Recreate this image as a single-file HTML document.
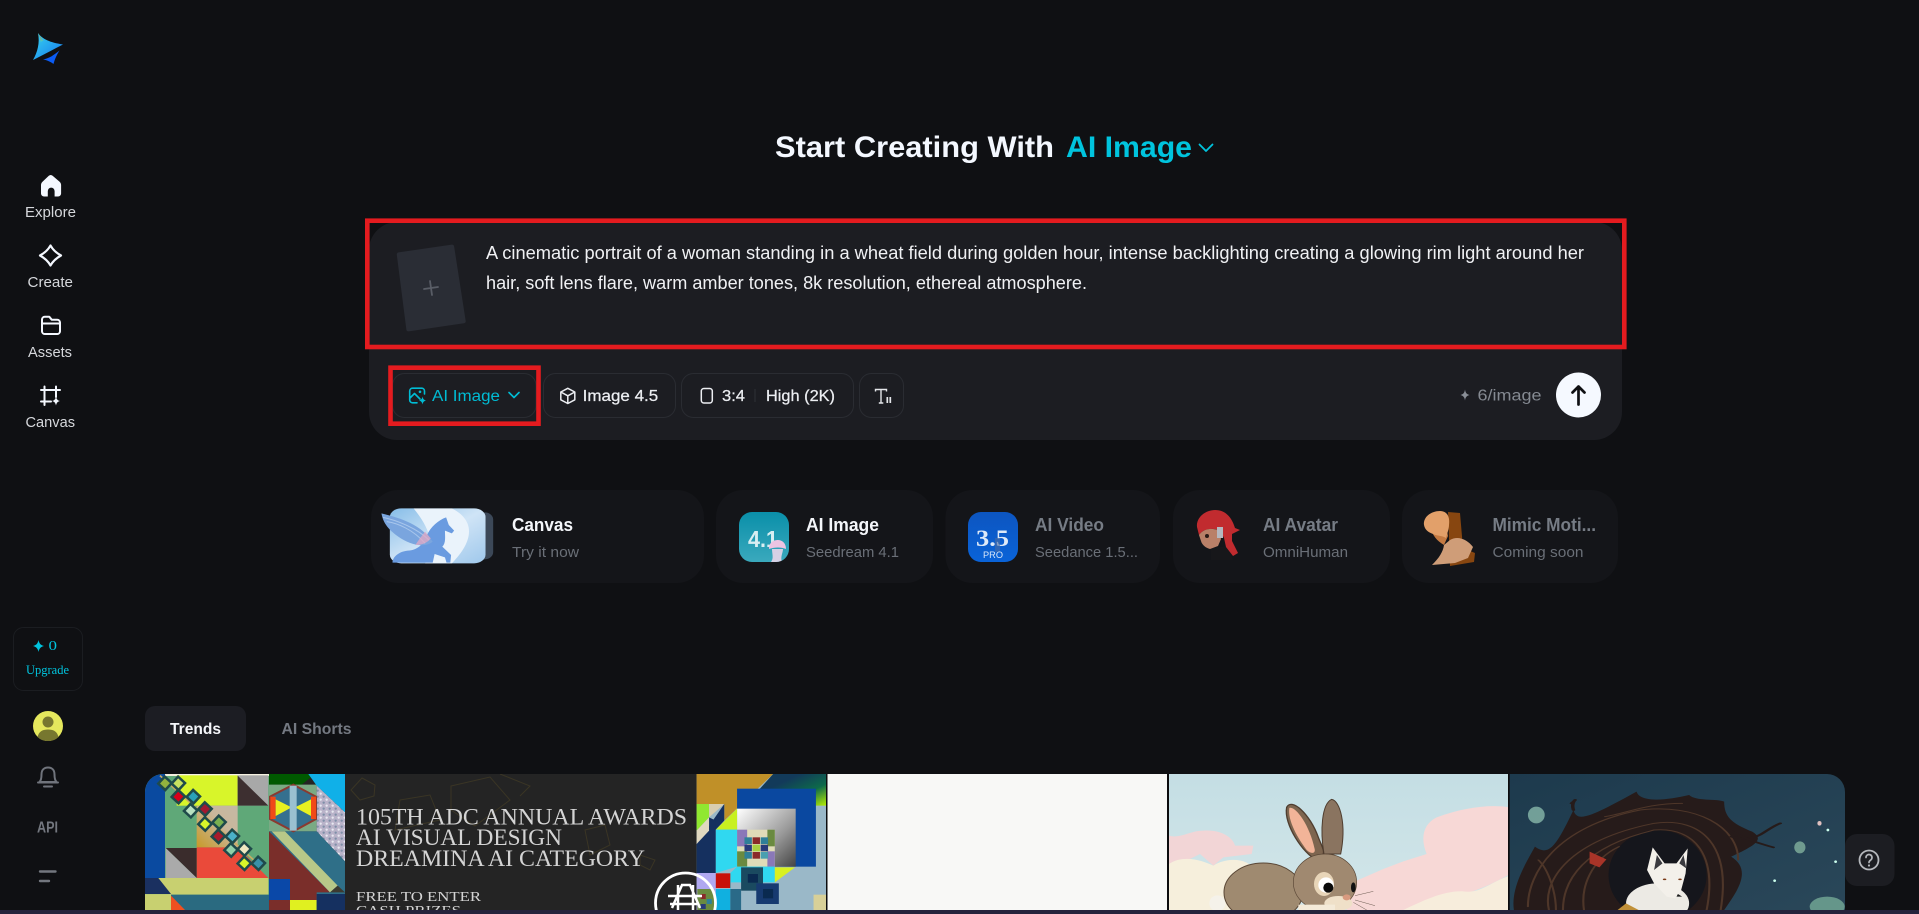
<!DOCTYPE html>
<html lang="en">
<head>
<meta charset="utf-8">
<title>Start Creating With AI Image</title>
<style>
html,body{margin:0;padding:0;width:1919px;height:914px;overflow:hidden;background:#0f1013}
svg{display:block}
text{font-family:"Liberation Sans",sans-serif}
.s{font-family:"Liberation Serif",serif}
</style>
</head>
<body>
<svg width="1919" height="914" viewBox="0 0 1919 914" xmlns="http://www.w3.org/2000/svg">
<defs>
<linearGradient id="lg" x1="0" y1="0" x2="1" y2="1"><stop offset="0" stop-color="#38d5ee"/><stop offset="1" stop-color="#1477f0"/></linearGradient>
<linearGradient id="lo" x1="0" y1="0" x2="0" y2="1"><stop offset="0" stop-color="#e8780f"/><stop offset="1" stop-color="#3cd0d8"/></linearGradient>
<linearGradient id="peg" x1="0" y1="0" x2="1" y2="1"><stop offset="0" stop-color="#86bde8"/><stop offset=".5" stop-color="#cfe4f6"/><stop offset="1" stop-color="#9fc8ec"/></linearGradient>
<linearGradient id="t41" x1="0" y1="0" x2="0" y2="1"><stop offset="0" stop-color="#0a8fa9"/><stop offset="1" stop-color="#3aa9bd"/></linearGradient>
<linearGradient id="t35" x1="0" y1="0" x2="0" y2="1"><stop offset="0" stop-color="#0c55c0"/><stop offset="1" stop-color="#0a63d8"/></linearGradient>
<linearGradient id="gold" x1="0" y1="1" x2="1" y2="0"><stop offset="0" stop-color="#c89a28"/><stop offset=".6" stop-color="#c9b79c"/><stop offset="1" stop-color="#c4b8a4"/></linearGradient>
<linearGradient id="lime" x1="0" y1="0" x2="1" y2="1"><stop offset=".3" stop-color="#123a5a"/><stop offset=".65" stop-color="#0d6a4a"/><stop offset="1" stop-color="#b8f000"/></linearGradient>
<linearGradient id="grayg" x1="0" y1="0" x2="1" y2="1"><stop offset="0" stop-color="#fff"/><stop offset=".6" stop-color="#999"/><stop offset="1" stop-color="#444"/></linearGradient>
<linearGradient id="fx" x1="0" y1="0" x2="1" y2="1"><stop offset="0" stop-color="#1d3a4d"/><stop offset="1" stop-color="#2a4759"/></linearGradient>
<linearGradient id="sky" x1="0" y1="0" x2="0" y2="1"><stop offset="0" stop-color="#c4dee4"/><stop offset="1" stop-color="#d3e6e9"/></linearGradient>
<clipPath id="gal"><path d="M145 930V792a18 18 0 0 1 18-18H1827a18 18 0 0 1 18 18V930Z"/></clipPath>
<clipPath id="a1"><rect x="145" y="774" width="681" height="136"/></clipPath>
<clipPath id="pegc"><rect x="78" y="85" width="250" height="165" rx="30" ry="26"/></clipPath>
<clipPath id="c41"><rect x="739" y="512" width="50" height="50" rx="13"/></clipPath>
<clipPath id="c35"><rect x="968" y="512" width="50" height="50" rx="13"/></clipPath>
<pattern id="dots" width="18" height="18" patternUnits="userSpaceOnUse"><rect width="18" height="18" fill="#b9b3c9"/><circle cx="5" cy="5" r="3.500" fill="#e8e8f0"/><circle cx="14" cy="14" r="3.500" fill="#7f8fa8"/></pattern>
<g id="dm"><rect x="-18" y="-18" width="36" height="36" fill="#1f4a4a"/><rect x="-10.500" y="-10.500" width="21" height="21"/></g>
</defs>

<rect width="1919" height="914" fill="#0f1013"/>

<!-- logo -->
<path d="M38 33C42 39 50 42.500 63 44.500C54 49 43 55 33 60C37.500 52 40 43 38 33Z" fill="url(#lg)"/>
<path d="M38 33C39.500 36 40.500 38 40.500 42L43.500 40.500C41 38 39 35 38 33Z" fill="url(#lo)"/>
<path d="M43 59.500C49 58.500 54 55 59.500 50.500C56.500 55 54.500 60 53.500 64C51 62 47 60 43 59.500Z" fill="#0b5cf5"/>

<!-- sidebar icons -->
<path d="M48.800 175.800a3 3 0 0 1 3.800 0l7 6a4 4 0 0 1 1.500 3v8.700a3 3 0 0 1-3 3h-3.500v-5.500a3.400 3.400 0 0 0-6.800 0v5.500h-3.800a3 3 0 0 1-3-3v-8.700a4 4 0 0 1 1.500-3z" fill="#f4f8ff"/>
<path d="M50.500 245.500C53 250 56.500 253 61 255.500C56.500 258 53 261 50.500 265.500C48 261 44.500 258 40 255.500C44.500 253 48 250 50.500 245.500Z" fill="none" stroke="#f4f8ff" stroke-width="2.200" stroke-linejoin="round"/>
<path d="M42 319.500a2.800 2.800 0 0 1 2.800-2.800h4.400l2.500 3h5.500a2.800 2.800 0 0 1 2.800 2.800v8.700a2.800 2.800 0 0 1-2.800 2.800H44.800a2.800 2.800 0 0 1-2.800-2.800zM42 323.500h17.800" fill="none" stroke="#f4f8ff" stroke-width="2" stroke-linejoin="round"/>
<path d="M44.500 386.500V405M56 386.500V397M41 390H60M41 401.500H51" fill="none" stroke="#f4f8ff" stroke-width="2" stroke-linecap="round"/>
<path d="M56 396.500C56.500 399 57.500 400.500 60 401C57.500 401.500 56.500 403 56 405.500C55.500 403 54.500 401.500 52 401C54.500 400.500 55.500 399 56 396.500Z" fill="#f4f8ff"/>
<g fill="#d6d8dc" font-size="14.500">
<text x="25" y="217" textLength="51" lengthAdjust="spacingAndGlyphs">Explore</text>
<text x="27.500" y="287" textLength="45.500" lengthAdjust="spacingAndGlyphs">Create</text>
<text x="28" y="357" textLength="44" lengthAdjust="spacingAndGlyphs">Assets</text>
<text x="25.500" y="427" textLength="49.500" lengthAdjust="spacingAndGlyphs">Canvas</text>
</g>

<!-- upgrade -->
<rect x="13.500" y="627.500" width="69" height="63" rx="10" fill="#0f1013" stroke="#1b1d21"/>
<path d="M38.500 640C39.200 643.500 40.500 645 44 646C40.500 647 39.200 648.500 38.500 652C37.800 648.500 36.500 647 33 646C36.500 645 37.800 643.500 38.500 640Z" fill="#00c4de"/>
<text class="s" x="48.500" y="650" font-size="13.500" fill="#00c4de" textLength="8.500" lengthAdjust="spacingAndGlyphs">0</text>
<text class="s" x="26" y="674" font-size="13" fill="#00c4de" textLength="43" lengthAdjust="spacingAndGlyphs">Upgrade</text>
<circle cx="48" cy="726" r="15" fill="#e5e85d"/>
<circle cx="48" cy="722" r="5.500" fill="#77772f"/>
<path d="M37.500 737C39 731 43 729.500 48 729.500S57 731 58.500 737C55.500 740 52 741 48 741S40.500 740 37.500 737Z" fill="#77772f"/>
<path d="M39.500 782C41.500 780 41.500 777 41.500 774.500C41.500 770 44 767.500 48 767.500S54.500 770 54.500 774.500C54.500 777 54.500 780 56.500 782ZM38 782.500H58M44 786.500H52" fill="none" stroke="#70747c" stroke-width="2" stroke-linecap="round" stroke-linejoin="round"/>
<text x="37" y="832.500" font-size="16" font-weight="700" fill="#73777f" textLength="21" lengthAdjust="spacingAndGlyphs">API</text>
<path d="M40 871.500H55.500M40 881H49" stroke="#73777f" stroke-width="2.400" stroke-linecap="round"/>

<!-- heading -->
<text x="775" y="157" font-size="30" font-weight="700" fill="#f4f8ff" textLength="279" lengthAdjust="spacingAndGlyphs">Start Creating With</text>
<text x="1066" y="157" font-size="30" font-weight="700" fill="#00c4de" textLength="126" lengthAdjust="spacingAndGlyphs">AI Image</text>
<path d="M1199.500 144.500L1206 151L1212.500 144.500" fill="none" stroke="#00c4de" stroke-width="1.800" stroke-linecap="round" stroke-linejoin="round"/>

<!-- prompt panel -->
<rect x="369" y="222" width="1253" height="218" rx="28" fill="#1c1d22"/>
<path d="M398.500 252.400L451.800 244.600a2 2 0 0 1 2.300 1.700L465.700 321a2 2 0 0 1-1.700 2.300L408.700 331.400a2 2 0 0 1-2.300-1.700L396.800 254.700a2 2 0 0 1 1.700-2.300Z" fill="#2a2d35"/>
<path d="M424 289L438 287M430 281L432 295" stroke="#595d66" stroke-width="1.800" stroke-linecap="round"/>
<text x="486" y="259" font-size="18" fill="#f0f1f4" textLength="1098" lengthAdjust="spacingAndGlyphs">A cinematic portrait of a woman standing in a wheat field during golden hour, intense backlighting creating a glowing rim light around her</text>
<text x="486" y="289" font-size="18" fill="#f0f1f4" textLength="601" lengthAdjust="spacingAndGlyphs">hair, soft lens flare, warm amber tones, 8k resolution, ethereal atmosphere.</text>

<!-- chips -->
<g fill="none" stroke="#2a2c32">
<rect x="392.500" y="373.500" width="143.500" height="44" rx="12"/>
<rect x="543.500" y="373.500" width="132" height="44" rx="12"/>
<rect x="681.500" y="373.500" width="172" height="44" rx="12"/>
<rect x="859.500" y="373.500" width="44" height="44" rx="12"/>
</g>
<path d="M424.500 394V391a2.800 2.800 0 0 0-2.800-2.800H412.500a2.800 2.800 0 0 0-2.800 2.800V400a2.800 2.800 0 0 0 2.800 2.800H417M410 398L414.500 393.500L420 399" fill="none" stroke="#00bcd4" stroke-width="1.600" stroke-linecap="round" stroke-linejoin="round"/>
<circle cx="420" cy="391.800" r="1.300" fill="#00bcd4"/>
<path d="M422.500 396.500C423 399 424 400 426 400.500C424 401 423 402 422.500 404.500C422 402 421 401 419 400.500C421 400 422 399 422.500 396.500Z" fill="#00bcd4"/>
<text x="432" y="401" font-size="15.500" fill="#00bcd4" textLength="68" lengthAdjust="spacingAndGlyphs">AI Image</text>
<path d="M509 392.500L514 397.500L519 392.500" fill="none" stroke="#00bcd4" stroke-width="1.600" stroke-linecap="round" stroke-linejoin="round"/>
<path d="M567.800 388.300L574.800 392V399.800L567.800 403.500L560.800 399.800V392ZM560.800 392L567.800 395.800L574.800 392M567.800 395.800V403.500" fill="none" stroke="#eceef2" stroke-width="1.500" stroke-linejoin="round"/>
<text x="582.700" y="401" font-size="15.500" fill="#eceef2" stroke="#eceef2" stroke-width=".25" textLength="75.500" lengthAdjust="spacingAndGlyphs">Image 4.5</text>
<rect x="701.300" y="388.500" width="11" height="14.500" rx="2.600" fill="none" stroke="#eceef2" stroke-width="1.500"/>
<text x="722" y="401" font-size="15.500" fill="#eceef2" stroke="#eceef2" stroke-width=".25" textLength="23" lengthAdjust="spacingAndGlyphs">3:4</text>
<path d="M755 389V402" stroke="#2c2e34" stroke-width="1.200"/>
<text x="766" y="401" font-size="15.500" fill="#eceef2" stroke="#eceef2" stroke-width=".25" textLength="69" lengthAdjust="spacingAndGlyphs">High (2K)</text>
<path d="M875.500 391.500V389.500H886.500V391.500M881 389.500V403M878.800 403H883.300" fill="none" stroke="#e4e6ea" stroke-width="1.400"/>
<path d="M887.300 397V403M890.300 397V403" stroke="#e4e6ea" stroke-width="1.700"/>

<path d="M1465 389.500C1465.600 393 1466.500 394 1469.500 395C1466.500 396 1465.600 397 1465 400.500C1464.400 397 1463.500 396 1460.500 395C1463.500 394 1464.400 393 1465 389.500Z" fill="#8a8f97"/>
<text x="1477.500" y="400.500" font-size="15.500" fill="#858a92" textLength="64" lengthAdjust="spacingAndGlyphs">6/image</text>
<circle cx="1578.500" cy="395" r="22.500" fill="#f5f9ff"/>
<path d="M1578.500 404.500V386.500M1572.500 392.500L1578.500 386.500L1584.500 392.500" fill="none" stroke="#0f1013" stroke-width="2.700" stroke-linecap="round" stroke-linejoin="round"/>

<!-- annotations -->
<rect x="367.300" y="220.700" width="1257" height="126.300" fill="none" stroke="#e41b1f" stroke-width="4.600"/>
<rect x="390.500" y="367.700" width="148" height="56" fill="none" stroke="#e41b1f" stroke-width="4.600"/>

<!-- cards -->
<g fill="#141519">
<rect x="371" y="490" width="333" height="93" rx="27"/>
<rect x="716" y="490" width="217" height="93" rx="27"/>
<rect x="945.500" y="490" width="214.500" height="93" rx="27"/>
<rect x="1173" y="490" width="217" height="93" rx="27"/>
<rect x="1402" y="490" width="216" height="93" rx="27"/>
</g>

<!-- pegasus thumb -->
<g transform="translate(360 480) scale(.3827 .3333)">
<rect x="250" y="97" width="98" height="141" rx="22" fill="#3c4858"/>
<rect x="78" y="85" width="250" height="165" rx="30" ry="26" fill="url(#peg)"/>
<g clip-path="url(#pegc)">
<path d="M140 85H240C300 120 300 180 240 250H170C200 200 180 140 140 85Z" fill="#eaf3fb"/>
</g>
<path d="M225 112L232 135L246 152L240 160L222 152C222 170 225 190 215 200L238 225L236 248H226L222 232L195 222L190 248H85C85 232 100 215 125 212C150 210 165 195 175 165C185 140 205 120 225 112Z" fill="#6a9be0"/>
<path d="M56 100C110 115 160 135 190 185C170 205 130 195 100 170C70 145 60 125 56 100Z" fill="#7aa5de"/>
<path d="M70 125C100 130 140 150 170 190M60 112C95 120 150 145 180 180" stroke="#a8c6ec" stroke-width="3" fill="none"/>
<path d="M170 155C160 170 150 185 145 195C160 195 175 190 185 175Z" fill="#e4a9c4" opacity=".75"/>
</g>
<text x="512" y="531" font-size="18" font-weight="700" fill="#f4f6fa" textLength="61" lengthAdjust="spacingAndGlyphs">Canvas</text>
<text x="512" y="557" font-size="15" fill="#6a6f77" textLength="67" lengthAdjust="spacingAndGlyphs">Try it now</text>

<!-- 4.1 -->
<rect x="739" y="512" width="50" height="50" rx="13" fill="url(#t41)"/>
<g clip-path="url(#c41)">
<text x="748" y="547" font-size="23" font-weight="700" fill="#d8eef2" textLength="30" lengthAdjust="spacingAndGlyphs">4.1</text>
<path d="M769 549C769 542 774 540 778 540S786 543 786 549C781 547 775 547 769 549Z" fill="#ecc4e2"/>
<path d="M772 549C772 554 774 558 771 562H782C780 557 783 553 783 549Z" fill="#f2d8ec" opacity=".85"/>
</g>
<text x="806" y="531" font-size="18" font-weight="700" fill="#f4f6fa" textLength="73" lengthAdjust="spacingAndGlyphs">AI Image</text>
<text x="806" y="557" font-size="15" fill="#6a6f77" textLength="93" lengthAdjust="spacingAndGlyphs">Seedream 4.1</text>

<!-- 3.5 -->
<rect x="968" y="512" width="50" height="50" rx="13" fill="url(#t35)"/>
<g clip-path="url(#c35)">
<text x="976" y="546" class="s" font-size="23" font-weight="700" fill="#dde9f8" textLength="33" lengthAdjust="spacingAndGlyphs">3.5</text>
<path d="M995 538h5v14h-5z" fill="#4a6aa0" opacity=".6"/>
<text x="983" y="558" font-size="9" fill="#d8e6f8" textLength="20" lengthAdjust="spacingAndGlyphs">PRO</text>
</g>
<text x="1035" y="531" font-size="18" font-weight="700" fill="#767c85" textLength="69" lengthAdjust="spacingAndGlyphs">AI Video</text>
<text x="1035" y="557" font-size="15" fill="#6a6f77" textLength="103" lengthAdjust="spacingAndGlyphs">Seedance 1.5...</text>

<!-- avatar -->
<path d="M1211 548L1228 546L1233 560H1211Z" fill="#17171a"/>
<path d="M1197 527C1196 517 1206 510 1215 510C1226 510 1232 518 1235 528L1240 530L1232 534L1232 541L1238 553L1233 556L1226 547L1224 538L1220 530C1212 528 1204 528 1199 535Z" fill="#c12b2f"/>
<path d="M1199 535C1204 528 1212 528 1218 530L1221 539L1218 546L1210 549C1206 548 1202 545 1201 541Z" fill="#b98068"/>
<circle cx="1207" cy="536" r="2" fill="#2a1a16"/>
<rect x="1217" y="527" width="6" height="11" fill="#b5b8c0"/>
<text x="1263" y="531" font-size="18" font-weight="700" fill="#767c85" textLength="75" lengthAdjust="spacingAndGlyphs">AI Avatar</text>
<text x="1263" y="557" font-size="15" fill="#6a6f77" textLength="85" lengthAdjust="spacingAndGlyphs">OmniHuman</text>

<!-- mimic -->
<path d="M1448 512L1460 513L1463 548L1475 553L1474 562L1450 566Z" fill="#a4530e" opacity=".8"/>
<path d="M1444 545L1450 540C1458 535 1468 540 1473 547L1468 558L1455 563L1432 565C1439 558 1443 552 1444 545Z" fill="#cf9d78"/>
<path d="M1431 528C1432 535 1437 541 1444 545L1448 536L1446 525Z" fill="#c47a42"/>
<path d="M1424 525C1423 517 1431 511 1440 511C1448 511 1450 518 1449 525C1449 529 1447 534 1446 538C1441 535 1436 536 1433 534C1428 532 1425 530 1424 525Z" fill="#e2a06a"/>
<text x="1492.500" y="531" font-size="18" font-weight="700" fill="#767c85" textLength="103.500" lengthAdjust="spacingAndGlyphs">Mimic Moti...</text>
<text x="1492.500" y="557" font-size="15" fill="#6a6f77" textLength="91" lengthAdjust="spacingAndGlyphs">Coming soon</text>

<!-- tabs -->
<rect x="145" y="706" width="101" height="45" rx="10" fill="#1c1d23"/>
<text x="170" y="734" font-size="16" font-weight="700" fill="#f4f6fa" textLength="51" lengthAdjust="spacingAndGlyphs">Trends</text>
<text x="281.500" y="734" font-size="16" font-weight="700" fill="#747982" textLength="70" lengthAdjust="spacingAndGlyphs">AI Shorts</text>

<!-- gallery -->
<g clip-path="url(#gal)">
<g clip-path="url(#a1)">
<rect x="145" y="774" width="681" height="140" fill="#242424"/>
<g fill="none" stroke="#3a3524" stroke-width="1">
<path d="M362 778L375 785L374 796L360 800L351 790ZM451 786L490 777L510 800L475 826L451 810ZM500 774L530 786L520 796M400 800L430 795L440 820L395 830ZM585 830L605 825L610 845L590 855ZM640 855L655 860L650 870L640 865Z"/>
</g>
<g transform="translate(145 774) scale(.33333)">
<rect width="372" height="408" fill="#5fa878"/>
<rect x="60" y="0" width="312" height="6" fill="#f4f0e0"/>
<rect width="60" height="312" fill="#0a4aa0"/>
<rect x="95" y="4" width="183" height="91" fill="#d8f52a"/>
<rect x="278" y="4" width="92" height="91" fill="#a8a8a8"/>
<path d="M278 5L278 95L370 95Z" fill="#3d2f30"/>
<rect x="155" y="95" width="123" height="125" fill="url(#gold)"/>
<path d="M155 220H278L370 312H155Z" fill="#ea4a3a"/>
<path d="M62 222H155V312Z" fill="#3a2c2c"/>
<path d="M62 222L155 312H62Z" fill="#aaaaaa"/>
<path d="M45 5L345 275" stroke="#c9ab62" stroke-width="5"/>
<use href="#dm" transform="translate(60 28) rotate(43)" fill="#93b23e"/>
<use href="#dm" transform="translate(100 68) rotate(43)" fill="#d8001a"/>
<use href="#dm" transform="translate(100 28) rotate(43)" fill="#c8e060"/>
<use href="#dm" transform="translate(145 68) rotate(43)" fill="#2aa0b8"/>
<use href="#dm" transform="translate(137 110) rotate(43)" fill="#b8e0c0"/>
<use href="#dm" transform="translate(180 105) rotate(43)" fill="#a01830"/>
<use href="#dm" transform="translate(180 150) rotate(43)" fill="#d8f52a"/>
<use href="#dm" transform="translate(222 145) rotate(43)" fill="#7ab050"/>
<use href="#dm" transform="translate(220 187) rotate(43)" fill="#a81c2c"/>
<use href="#dm" transform="translate(262 187) rotate(43)" fill="#4ab0c8"/>
<use href="#dm" transform="translate(258 228) rotate(43)" fill="#90d0a8"/>
<use href="#dm" transform="translate(298 225) rotate(43)" fill="#f0e8c0"/>
<use href="#dm" transform="translate(298 268) rotate(43)" fill="#d8f52a"/>
<use href="#dm" transform="translate(340 268) rotate(43)" fill="#3a90a8"/>
<path d="M0 312H370V362H0Z" fill="#c8d070"/>
<path d="M0 312H40L78 360H0Z" fill="#1a3060"/>
<rect y="362" width="78" height="46" fill="#c8d070"/>
<rect x="78" y="362" width="294" height="46" fill="#2a6a80"/>
<path d="M78 365L120 408H78Z" fill="#f05020"/>
<path d="M372 0H510L470 32H372Z" fill="#005a00"/>
<path d="M372 32H515V172H372Z" fill="#7aaa84"/>
<path d="M490 0H600V115L515 35Z" fill="#10b0e8"/>
<path d="M515 35L600 115V262L515 172Z" fill="url(#dots)"/>
<path d="M372 172H515L600 262V408H372Z" fill="#2f6f88"/>
<path d="M372 172V355H555Z" fill="#7a2e2a"/>
<path d="M380 172H420L578 335L555 355Z" fill="#b8c888"/>
<path d="M375 68L445 32L513 68V135L445 172L375 135Z" fill="#35708f" stroke="#8a3a30" stroke-width="6"/>
<rect x="376" y="68" width="16" height="67" fill="#f04a18"/>
<rect x="498" y="68" width="15" height="67" fill="#f04a18"/>
<path d="M392 76L440 100L392 126ZM498 76L450 100L498 126Z" fill="#e8f020"/>
<rect x="434" y="35" width="21" height="135" fill="#9ac0d0"/>
<rect x="372" y="315" width="63" height="63" fill="#0a48a8"/>
<rect x="435" y="315" width="80" height="63" fill="#7a2e2a"/>
<rect x="372" y="378" width="63" height="30" fill="#7a2e2a"/>
<rect x="435" y="378" width="80" height="30" fill="#e0f020"/>
<path d="M555 355L578 335L600 355Z" fill="#3d3a30"/>
<rect x="515" y="360" width="85" height="48" fill="#153060"/>
</g>
<g fill="#d4d4d4">
<text class="s" x="356" y="824.500" font-size="23" textLength="331" lengthAdjust="spacingAndGlyphs">105TH ADC ANNUAL AWARDS</text>
<text class="s" x="356" y="845" font-size="23" textLength="206" lengthAdjust="spacingAndGlyphs">AI VISUAL DESIGN</text>
<text class="s" x="356" y="866" font-size="23" textLength="289" lengthAdjust="spacingAndGlyphs">DREAMINA AI CATEGORY</text>
<text class="s" x="356" y="901" font-size="14" textLength="125" lengthAdjust="spacingAndGlyphs">FREE TO ENTER</text>
<text class="s" x="356" y="915" font-size="14" textLength="105" lengthAdjust="spacingAndGlyphs">CASH PRIZES</text>
</g>
<g transform="translate(640 774) scale(.337 .33333)">
<rect x="168" width="400" height="408" fill="#9ab8c8"/>
<path d="M168 0H395L250 140V90H168Z" fill="#c09028"/>
<path d="M395 0H555V95H400L355 45Z" fill="url(#lime)"/>
<path d="M168 210L250 90V140L225 167V297H168Z" fill="#15305f"/>
<path d="M168 90H205V130L168 170Z" fill="#90e830"/>
<path d="M205 90H250L205 130Z" fill="#d8cdb0"/>
<path d="M168 170L205 130V170L168 210Z" fill="#e0d8c0"/>
<path d="M205 170L205 130L225 140L225 167Z" fill="#15305f"/>
<rect x="288" y="44" width="234" height="234" fill="#0a48a0"/>
<rect x="288" y="104" width="174" height="174" fill="url(#grayg)"/>
<rect x="288" y="167" width="112" height="111" fill="#e0dcb8"/>
<rect x="288" y="167" width="30" height="50" fill="#8a78b8"/>
<rect x="378" y="167" width="22" height="50" fill="#6a8a40"/>
<rect x="288" y="232" width="30" height="46" fill="#6a8a40"/>
<rect x="378" y="232" width="22" height="46" fill="#8a78b8"/>
<rect x="310" y="190" width="22" height="20" fill="#2f7f98"/>
<rect x="334" y="190" width="22" height="20" fill="#8a2a2a"/>
<rect x="358" y="190" width="22" height="20" fill="#2f7f98"/>
<rect x="310" y="212" width="22" height="20" fill="#283a7a"/>
<rect x="334" y="212" width="22" height="20" fill="#a8d040"/>
<rect x="358" y="212" width="22" height="20" fill="#283a7a"/>
<rect x="310" y="234" width="22" height="20" fill="#2f7f98"/>
<rect x="334" y="234" width="22" height="20" fill="#8a2a2a"/>
<rect x="358" y="234" width="22" height="20" fill="#4a9fb0"/>
<path d="M225 167L288 104V167Z" fill="#c8f020"/>
<path d="M225 167H288V278L225 297Z" fill="#30d8f0"/>
<path d="M288 278H400V325H270V345H268L268 297Z" fill="#30d8f0"/>
<path d="M400 280H460L400 325Z" fill="#d8f020"/>
<rect x="168" y="297" width="57" height="111" fill="#b0a8f0"/>
<rect x="225" y="298" width="43" height="44" fill="#c81008"/>
<rect x="225" y="345" width="43" height="63" fill="#10b0e0"/>
<rect x="268" y="345" width="32" height="63" fill="#2a6a88"/>
<rect x="300" y="280" width="65" height="70" fill="#1a4a60"/>
<rect x="345" y="328" width="67" height="62" fill="#173a70"/>
<rect x="320" y="300" width="30" height="26" fill="#0a2a50"/>
<rect x="365" y="345" width="30" height="28" fill="#0a2a50"/>
<rect x="170" y="345" width="50" height="63" fill="#6a8a40"/>
<rect x="180" y="360" width="15" height="15" fill="#8a2a2a"/><rect x="198" y="375" width="15" height="15" fill="#2f7f98"/><rect x="180" y="390" width="15" height="15" fill="#283a7a"/>
<rect x="515" y="362" width="45" height="46" fill="#d8d098"/>
</g>
<circle cx="685.500" cy="903" r="30" fill="none" stroke="#fff" stroke-width="2.800"/>
<path d="M672 908L682 885H690L700 908M668 896H702M670 904H697M678 885V912M693 885V912" fill="none" stroke="#fff" stroke-width="2.500"/>
</g>

<rect x="826" y="774" width="2" height="140" fill="#0c0c0e"/>
<rect x="827.500" y="774" width="339.500" height="140" fill="#f8f8f6"/>
<rect x="1167" y="774" width="2" height="140" fill="#0c0c0e"/>

<!-- rabbit -->
<g transform="translate(1170 774) scale(.33333)">
<rect x="-3" width="1024" height="408" fill="url(#sky)"/>
<path d="M-3 185C30 195 60 170 100 170C150 165 190 190 195 215L250 215L245 240L160 250L130 275L90 240L30 270H-3Z" fill="#f2d5d6"/>
<path d="M-3 270C40 240 100 260 130 275C170 250 230 250 260 290L300 408H-3Z" fill="#f6efdc"/>
<path d="M1020 100C960 90 880 100 800 130C760 150 750 190 770 240L700 262L640 285L560 320L530 408H700C800 380 900 370 1020 300Z" fill="#f7d8d6"/>
<path d="M700 408C760 380 820 350 880 352C930 360 960 325 1020 305V408Z" fill="#f7eddc"/>
<circle cx="142" cy="388" r="24" fill="#f5f2ea"/>
<ellipse cx="280" cy="355" rx="118" ry="88" fill="#9f8a70" stroke="#5a4736" stroke-width="3"/>
<path d="M350 100C365 70 420 120 445 190C458 225 475 240 440 258C400 240 340 150 350 100Z" fill="#7d654f" stroke="#4f3d2f" stroke-width="4"/>
<path d="M358 102C375 95 418 150 434 225C437 238 425 242 410 228C385 195 352 140 358 102Z" fill="#f2b498"/>
<path d="M485 76C510 80 530 150 512 240H462C450 170 455 90 485 76Z" fill="#8a7460" stroke="#4f3d2f" stroke-width="3"/>
<ellipse cx="465" cy="325" rx="95" ry="85" fill="#a08970" stroke="#5a4736" stroke-width="2"/>
<ellipse cx="505" cy="388" rx="42" ry="22" fill="#efe0c8"/>
<rect x="385" y="392" width="110" height="16" fill="#f4ead8"/>
<ellipse cx="462" cy="330" rx="30" ry="36" fill="#e8d5b8"/>
<circle cx="468" cy="333" r="23" fill="#fff"/>
<circle cx="475" cy="341" r="15" fill="#0a0a0a"/>
<ellipse cx="550" cy="340" rx="7" ry="15" fill="#111"/>
<ellipse cx="530" cy="370" rx="12" ry="9" fill="#d89a7f"/>
<path d="M555 365L610 352M555 378L615 395M550 385L590 408" stroke="#6a5a50" stroke-width="1.500" fill="none"/>
</g>
<rect x="1508" y="774" width="2" height="140" fill="#0c0c0e"/>

<!-- fox -->
<g transform="translate(820 760) scale(.7009 .33333)">
<rect x="984" y="42" width="480" height="410" fill="url(#fx)"/>
<path d="M990 450C985 380 1010 300 1020 260C1040 290 1050 260 1075 150C1080 190 1100 170 1165 95C1170 130 1210 120 1240 105C1250 125 1280 115 1290 125C1290 170 1300 190 1330 215C1350 240 1330 260 1300 290C1330 330 1310 390 1290 450Z" fill="#261b1a"/>
<ellipse cx="1195" cy="345" rx="70" ry="135" fill="#15161c"/>
<g fill="none" stroke="#4e3629" stroke-width="3" stroke-linecap="round">
<path d="M1040 450C1030 360 1070 240 1190 190C1260 170 1300 260 1285 450"/>
<path d="M1060 450C1060 360 1090 260 1190 210C1250 200 1280 290 1265 450"/>
<path d="M1010 440C1010 340 1050 200 1170 150C1250 130 1310 200 1310 300"/>
<path d="M1090 450C1085 380 1100 300 1140 260M1025 300C1040 330 1050 400 1050 450M1120 170C1150 160 1180 130 1230 130"/>
</g>
<g fill="none" stroke="#261b1a" stroke-linecap="round">
<path d="M1300 230C1340 250 1345 210 1370 190" stroke-width="5"/>
<path d="M1290 200C1320 240 1340 250 1360 262" stroke-width="5"/>
<path d="M1075 150C1070 120 1085 110 1072 130" stroke-width="5"/>
</g>
<ellipse cx="1195" cy="430" rx="45" ry="60" fill="#eceae4"/>
<path d="M1188 262L1205 310H1222L1238 265L1235 340L1228 395L1220 415L1208 410L1190 370L1180 330Z" fill="#f3f0ea"/>
<path d="M1194 285L1202 310L1190 330ZM1232 285L1226 310L1236 325Z" fill="#3a3a3f"/>
<circle cx="1205" cy="358" r="2.500" fill="#7a3a18"/><circle cx="1227" cy="358" r="2.500" fill="#7a3a18"/>
<path d="M1224 402L1230 410L1222 410Z" fill="#1a1a1a"/>
<path d="M1098 275L1122 298L1112 322L1098 310Z" fill="#a83428"/>
<path d="M1138 450L1150 430L1168 450Z" fill="#c09038"/>
<ellipse cx="1022" cy="165" rx="12" ry="25" fill="#8fc0b0" opacity=".75"/>
<ellipse cx="1398" cy="262" rx="8" ry="18" fill="#8fc0a8" opacity=".7"/>
<ellipse cx="1437" cy="440" rx="25" ry="30" fill="#7fb8a0" opacity=".7"/>
<ellipse cx="1426" cy="190" rx="3" ry="7" fill="#e0c0c0"/>
<ellipse cx="1362" cy="362" rx="2" ry="4" fill="#cfe"/><ellipse cx="1449" cy="305" rx="2" ry="4" fill="#cfe"/><ellipse cx="1438" cy="210" rx="2" ry="4" fill="#cfe"/>
</g>
</g>

<!-- help -->
<path d="M1845 846a12 12 0 0 1 12-12h25.500a12 12 0 0 1 12 12v28a12 12 0 0 1-12 12H1857a12 12 0 0 1-12-12Z" fill="#1c1d22"/>
<circle cx="1869" cy="860" r="9.500" fill="none" stroke="#b4b7bc" stroke-width="1.800"/>
<path d="M1866 857.500a3 3 0 1 1 4.800 2.400c-1 .7-1.800 1.300-1.800 2.600" fill="none" stroke="#b4b7bc" stroke-width="1.700" stroke-linecap="round"/>
<circle cx="1869" cy="865.500" r="1.100" fill="#b4b7bc"/>

<!-- bottom strip -->
<rect y="910" width="1919" height="4" fill="#25233c"/>
</svg>
</body>
</html>
